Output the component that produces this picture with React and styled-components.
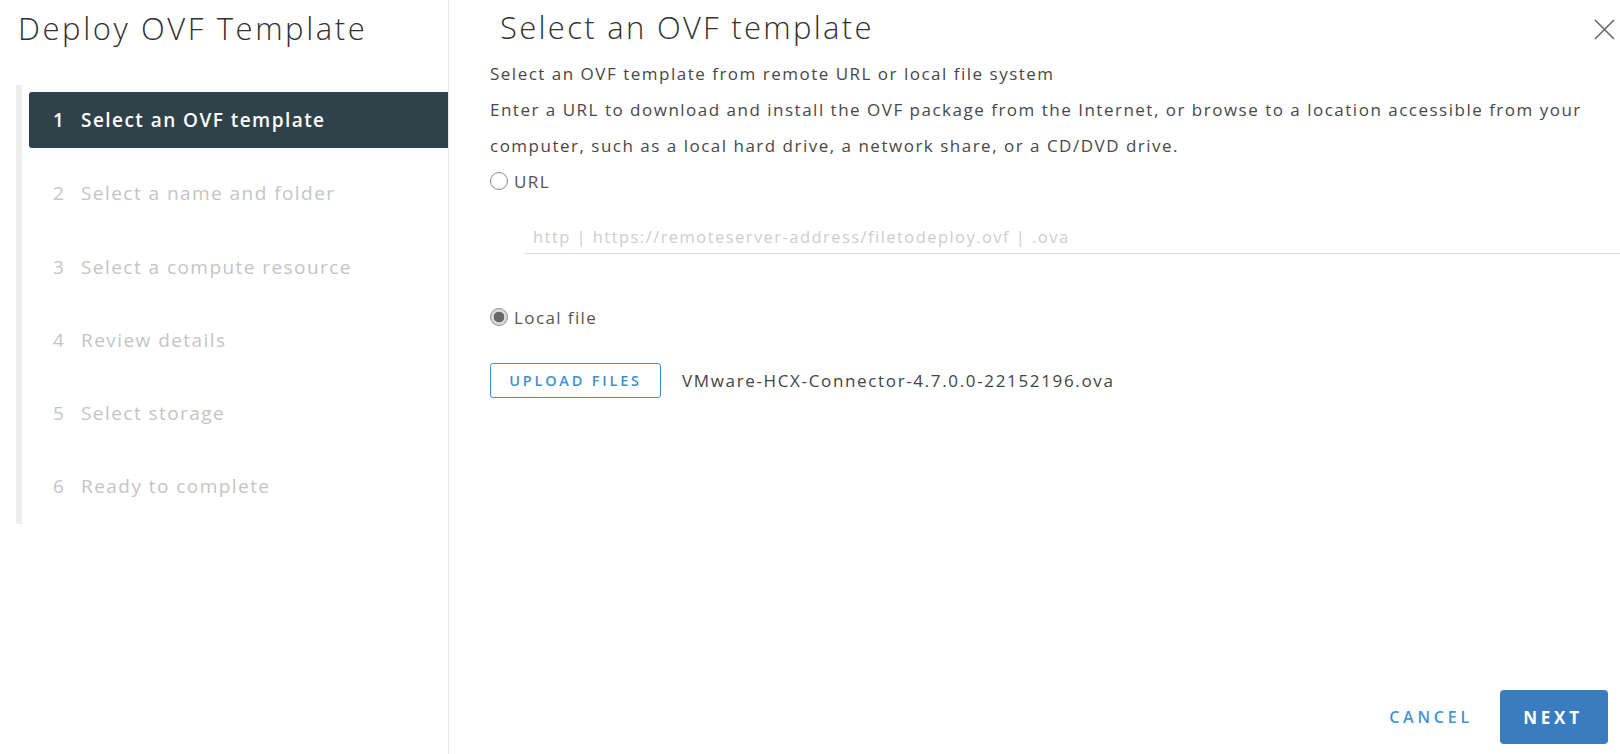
import React from 'react'
import styled, { createGlobalStyle } from 'styled-components'

const GlobalStyle = createGlobalStyle`
  html, body {
    margin: 0;
    padding: 0;
    background: #fff;
    font-family: "Open Sans", "Noto Sans", sans-serif;
    color: #333;
  }
`

const steps = [
  'Select an OVF template',
  'Select a name and folder',
  'Select a compute resource',
  'Review details',
  'Select storage',
  'Ready to complete',
]

function CloseIcon() {
  return (
    <svg width="21" height="21" viewBox="0 0 21 21">
      <path d="M1 1 L20 20 M20 1 L1 20" stroke="#666" strokeWidth="1.6" fill="none" />
    </svg>
  )
}

export default function App() {
  return (
    <Modal>
      <GlobalStyle />
      <Sidebar>
        <SideTitle>Deploy OVF Template</SideTitle>
        <StepList>
          {steps.map((s, i) => (
            <Step key={s} active={i === 0}>
              <StepNum>{i + 1}</StepNum>
              {s}
            </Step>
          ))}
        </StepList>
      </Sidebar>
      <Content>
        <Header>
          <Title>Select an OVF template</Title>
          <CloseButton><CloseIcon /></CloseButton>
        </Header>
        <Body>
          <Text>Select an OVF template from remote URL or local file system</Text>
          <Text>
            Enter a URL to download and install the OVF package from the Internet, or browse to a location accessible from your
            computer, such as a local hard drive, a network share, or a CD/DVD drive.
          </Text>
          <RadioRow>
            <Radio />
            URL
          </RadioRow>
          <UrlInput placeholder="http | https://remoteserver-address/filetodeploy.ovf | .ova" />
          <RadioRow local>
            <Radio checked />
            Local file
          </RadioRow>
          <UploadRow>
            <OutlineButton>UPLOAD FILES</OutlineButton>
            <FileName>VMware-HCX-Connector-4.7.0.0-22152196.ova</FileName>
          </UploadRow>
        </Body>
        <Footer>
          <FlatButton>CANCEL</FlatButton>
          <PrimaryButton>NEXT</PrimaryButton>
        </Footer>
      </Content>
    </Modal>
  )
}

const Modal = styled.div`
  display: flex;
  height: 754px;
  width: 1620px;
  overflow: hidden;
`

const Sidebar = styled.div`
  width: 448px;
  flex-shrink: 0;
  border-right: 1px solid #e6e6e6;
  display: flex;
  flex-direction: column;
`

const SideTitle = styled.h1`
  margin: 0;
  padding: 9px 0 0 18px;
  font-size: 31px;
  font-weight: 300;
  color: #313131;
  letter-spacing: 2.6px;
  line-height: 38px;
  white-space: nowrap;
`

const StepList = styled.ul`
  list-style: none;
  margin: 38px 0 0 16px;
  padding: 7px 0 10px 0;
  border-left: 6px solid #eeeeee;
  display: flex;
  flex-direction: column;
  gap: 17.3px;
`

const Step = styled.li`
  height: 56px;
  margin-left: 7px;
  display: flex;
  align-items: center;
  padding-left: 24px;
  border-radius: 3px 0 0 3px;
  font-size: 19px;
  letter-spacing: 1.45px;
  white-space: nowrap;
  background: ${p => (p.active ? '#2f4249' : 'transparent')};
  color: ${p => (p.active ? '#fff' : '#c4c4c4')};
  font-weight: ${p => (p.active ? 600 : 400)};
`

const StepNum = styled.span`
  width: 28px;
`

const Content = styled.div`
  flex: 1;
  display: flex;
  flex-direction: column;
  padding-left: 41px;
  min-width: 0;
`

const Header = styled.div`
  display: flex;
  justify-content: space-between;
  align-items: flex-start;
  padding: 8px 5px 0 10px;
`

const Title = styled.h2`
  margin: 0;
  font-size: 31px;
  font-weight: 300;
  color: #313131;
  line-height: 38px;
  letter-spacing: 2.3px;
`

const CloseButton = styled.button`
  border: none;
  background: none;
  padding: 0;
  margin-top: 11px;
  cursor: pointer;
`

const Body = styled.div`
  flex: 1;
  display: flex;
  flex-direction: column;
  padding-top: 10px;
`

const Text = styled.p`
  margin: 0;
  max-width: 1120px;
  font-size: 17px;
  line-height: 36px;
  color: #484848;
  letter-spacing: 1.5px;
`

const RadioRow = styled.label`
  display: flex;
  align-items: center;
  gap: 6px;
  font-size: 17px;
  letter-spacing: 1.4px;
  color: #555;
  margin-top: ${p => (p.local ? '51px' : '5px')};
  height: 24px;
`

const Radio = styled.span`
  width: 18px;
  height: 18px;
  border-radius: 50%;
  box-sizing: border-box;
  border: 1.5px solid ${p => (p.checked ? '#8f8f8f' : '#8a8a8a')};
  background: ${p => (p.checked ? 'radial-gradient(circle, #676767 0 5px, #d9d9d9 5.6px)' : '#fff')};
`

const UrlInput = styled.input`
  margin: 27px 0 0 35px;
  box-sizing: border-box;
  border: none;
  border-bottom: 1px solid #dcdcdc;
  padding: 0 8px;
  height: 34px;
  font-family: inherit;
  font-size: 16.5px;
  letter-spacing: 1.45px;
  outline: none;
  &::placeholder {
    color: #cdcdcd;
  }
`

const UploadRow = styled.div`
  display: flex;
  align-items: center;
  gap: 21px;
  margin-top: 34px;
`

const OutlineButton = styled.button`
  height: 35px;
  width: 171px;
  padding: 0;
  border: 1px solid #3f8fcf;
  border-radius: 3px;
  background: #fff;
  color: #3f8fcf;
  font-family: inherit;
  font-size: 14.5px;
  font-weight: 600;
  letter-spacing: 2.8px;
`

const FileName = styled.span`
  font-size: 17px;
  letter-spacing: 1.65px;
  color: #444;
`

const Footer = styled.div`
  display: flex;
  justify-content: flex-end;
  align-items: center;
  gap: 19px;
  padding: 0 12px 10px 0;
`

const FlatButton = styled.button`
  border: none;
  background: none;
  color: #3f94d2;
  font-family: inherit;
  font-size: 16px;
  font-weight: 600;
  letter-spacing: 3.8px;
  padding: 0 8px 0 12px;
`

const PrimaryButton = styled.button`
  width: 108px;
  height: 54px;
  border: none;
  border-radius: 4px;
  background: #3a7dbf;
  color: #fff;
  font-family: inherit;
  font-size: 17px;
  font-weight: 700;
  letter-spacing: 3.8px;
  padding-left: 4px;
`
